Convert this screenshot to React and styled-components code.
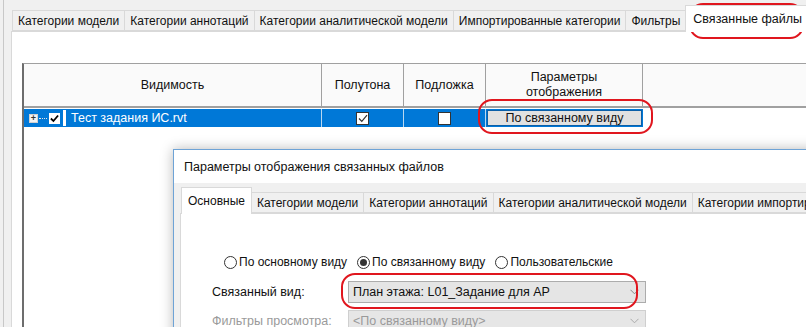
import React from 'react'
import styled, { createGlobalStyle } from 'styled-components'

const Global = createGlobalStyle`
    body {
        margin: 0;
        background: #f0f0f0;
        font-family: "Liberation Sans", Arial, sans-serif;
        font-size: 12px;
        color: #1e1e1e;
        overflow: hidden;
    }
`

const Screen = styled.div`
    position: relative;
    width: 806px;
    height: 327px;
    overflow: hidden;
    background: linear-gradient(to right, #f0f0f0 3px, #c8c8c8 3px, #c8c8c8 4px, #f0f0f0 4px);
    box-sizing: border-box;
    padding: 10px 0 0 11px;
    display: flex;
    flex-direction: column;
`

const TabBar = styled.div`
    display: flex;
    align-items: flex-end;
    height: 21px;
    padding-left: ${p => p.$pad || 2}px;
    position: relative;
    z-index: 1;
`

const Tab = styled.div`
    height: ${p => (p.$active ? 27 : 21)}px;
    margin-bottom: ${p => (p.$active ? -1 : 0)}px;
    padding: 0 ${p => p.$px || 5}px;
    display: flex;
    align-items: center;
    box-sizing: border-box;
    background: ${p => (p.$active ? '#fff' : '#f0f0f0')};
    border: 1px solid #d9d9d9;
    border-bottom: ${p => (p.$active ? 'none' : '1px solid #d9d9d9')};
    margin-left: -1px;
    white-space: nowrap;
    font-size: ${p => p.$fs || 12}px;
    color: #111;
`

const Pane = styled.div`
    flex: 1;
    background: #fff;
    border: 1px solid #d9d9d9;
    border-right: none;
    padding: 31px 0 0 10px;
`

const Table = styled.div`
    border-top: 1px solid #a0a0a0;
    border-left: 2px solid #6d6d6d;
    height: 300px;
`

const HeadRow = styled.div`
    display: flex;
    height: 42px;
    background: #fafafa;
    border-bottom: 2px solid #a0a0a0;
`

const HeadCell = styled.div`
    width: ${p => p.$w}px;
    flex: ${p => (p.$w ? 'none' : 1)};
    border-right: ${p => (p.$w ? '1px solid #a0a0a0' : 'none')};
    display: flex;
    align-items: center;
    justify-content: center;
    text-align: center;
    font-size: 12.5px;
    line-height: 15px;
    color: #111;
`

const Row = styled.div`
    display: flex;
    height: 18px;
    width: 619px;
    background: #0078d7;
    color: #fff;
    margin-top: 1px;
`

const Cell = styled.div`
    width: ${p => p.$w}px;
    border-right: ${p => (p.$last ? 'none' : '1px solid #b9d7f0')};
    display: flex;
    align-items: center;
    justify-content: ${p => (p.$left ? 'flex-start' : 'center')};
    box-sizing: border-box;
    font-size: 12.5px;
`

const Expander = styled.span`
    width: 7px;
    height: 7px;
    border: 1px solid #d0d0d0;
    background: #f3f3f3;
    margin-left: 5px;
    display: inline-flex;
    align-items: center;
    justify-content: center;
    color: #333;
    font-size: 9px;
    line-height: 1;
    font-weight: bold;
`

const Dots = styled.span`
    width: 8px;
    border-top: 1px dotted #e6e6e6;
    margin: 0 2px 0 1px;
`

const Box = styled.span`
    width: ${p => p.$s || 13}px;
    height: ${p => p.$s || 13}px;
    box-sizing: border-box;
    background: #fff;
    border: 1px solid ${p => p.$border || '#333'};
    display: inline-flex;
    align-items: center;
    justify-content: center;
`

const Divider = styled.span`
    width: 3px;
    align-self: stretch;
    background: #fff;
    margin: 1px 5px 1px 3px;
`

const CellButton = styled.div`
    width: 155px;
    height: 16px;
    box-sizing: border-box;
    background: #e1e1e1;
    border: 1px solid #0b5fa8;
    color: #111;
    display: flex;
    align-items: center;
    justify-content: center;
    font-size: 12.5px;
`

const Dialog = styled.div`
    position: absolute;
    left: 173px;
    top: 149px;
    width: 700px;
    height: 220px;
    background: #f0f0f0;
    border: 1px solid #6ea3d6;
    box-shadow: 0 0 12px rgba(0, 0, 0, 0.28);
    display: flex;
    flex-direction: column;
`

const TitleBar = styled.div`
    height: 33px;
    background: #fff;
    display: flex;
    align-items: center;
    padding-left: 10px;
    font-size: 12.5px;
    color: #111;
`

const DialogBody = styled.div`
    flex: 1;
    padding: 9px 0 0 6px;
    display: flex;
    flex-direction: column;
`

const DialogPane = styled.div`
    flex: 1;
    background: #fff;
    border: 1px solid #d9d9d9;
    padding: 37px 0 0 31px;
`

const RadioRow = styled.div`
    display: flex;
    align-items: center;
    padding-left: 12px;
    height: 22px;
`

const RadioItem = styled.label`
    display: flex;
    align-items: center;
    margin-right: 10px;
    font-size: 12px;
    color: #111;
`

const Radio = styled.span`
    width: 13px;
    height: 13px;
    border-radius: 50%;
    border: 1px solid #333;
    box-sizing: border-box;
    background: #fff;
    margin-right: 2px;
    display: inline-flex;
    align-items: center;
    justify-content: center;
    &::after {
        content: '';
        width: 7px;
        height: 7px;
        border-radius: 50%;
        background: ${p => (p.$on ? '#333' : 'transparent')};
    }
`

const FormRow = styled.div`
    display: flex;
    align-items: center;
    margin-top: ${p => p.$mt}px;
`

const Label = styled.div`
    width: 136px;
    font-size: 12.5px;
    color: ${p => (p.$disabled ? '#9a9a9a' : '#111')};
`

const Combo = styled.div`
    width: 298px;
    height: 22px;
    box-sizing: border-box;
    border: 1px solid ${p => (p.$disabled ? '#cfcfcf' : '#acacac')};
    background: ${p => (p.$disabled ? '#e6e6e6' : '#e5e5e5')};
    color: ${p => (p.$disabled ? '#9a9a9a' : '#111')};
    display: flex;
    align-items: center;
    justify-content: space-between;
    padding: 0 6px 0 4px;
    font-size: 12.5px;
`

const Marker = styled.div`
    position: absolute;
    left: ${p => p.$x}px;
    top: ${p => p.$y}px;
    width: ${p => p.$w}px;
    height: ${p => p.$h}px;
    border: 2px solid #e0161e;
    border-radius: ${p => p.$r}px;
    box-sizing: border-box;
    pointer-events: none;
`

const Check = ({ bold }) => (
    <svg width="10" height="9" viewBox="0 0 10 9">
        <path d="M1 4.5 L3.8 7.3 L9 1.2" fill="none" stroke={bold ? '#000' : '#333'} strokeWidth={bold ? 2 : 1.2} />
    </svg>
)

const Chevron = ({ color }) => (
    <svg width="9" height="6" viewBox="0 0 9 6">
        <path d="M0.5 0.8 L4.5 4.8 L8.5 0.8" fill="none" stroke={color} strokeWidth="1" />
    </svg>
)

const tabs = ['Категории модели', 'Категории аннотаций', 'Категории аналитической модели', 'Импортированные категории', 'Фильтры']
const dialogTabs = ['Категории модели', 'Категории аннотаций', 'Категории аналитической модели', 'Категории импортированных']

const App = () => {
    return (
        <>
            <Global />
            <Screen>
                <TabBar>
                    {tabs.map(t => <Tab key={t} $px={5}>{t}</Tab>)}
                    <Tab $active $px={7} $fs={12.5}>Связанные файлы</Tab>
                </TabBar>
                <Pane>
                    <Table>
                        <HeadRow>
                            <HeadCell $w={297}>Видимость</HeadCell>
                            <HeadCell $w={81}>Полутона</HeadCell>
                            <HeadCell $w={81}>Подложка</HeadCell>
                            <HeadCell $w={156}>Параметры<br />отображения</HeadCell>
                            <HeadCell />
                        </HeadRow>
                        <Row>
                            <Cell $w={298} $left>
                                <Expander>+</Expander>
                                <Dots />
                                <Box $s={11} $border="#fff"><Check bold /></Box>
                                <Divider />
                                Тест задания ИС.rvt
                            </Cell>
                            <Cell $w={82}><Box><Check /></Box></Cell>
                            <Cell $w={82}><Box /></Cell>
                            <Cell $w={157} $last><CellButton>По связанному виду</CellButton></Cell>
                        </Row>
                    </Table>
                </Pane>

                <Dialog>
                    <TitleBar>Параметры отображения связанных файлов</TitleBar>
                    <DialogBody>
                        <TabBar $pad={2}>
                            <Tab $active $px={6}>Основные</Tab>
                            {dialogTabs.map(t => <Tab key={t} $px={5}>{t}</Tab>)}
                        </TabBar>
                        <DialogPane>
                            <RadioRow>
                                <RadioItem><Radio />По основному виду</RadioItem>
                                <RadioItem><Radio $on />По связанному виду</RadioItem>
                                <RadioItem><Radio />Пользовательские</RadioItem>
                            </RadioRow>
                            <FormRow $mt={8}>
                                <Label>Связанный вид:</Label>
                                <Combo>План этажа: L01_Задание для АР<Chevron color="#888" /></Combo>
                            </FormRow>
                            <FormRow $mt={7}>
                                <Label $disabled>Фильтры просмотра:</Label>
                                <Combo $disabled>&lt;По связанному виду&gt;<Chevron color="#aaa" /></Combo>
                            </FormRow>
                        </DialogPane>
                    </DialogBody>
                </Dialog>

                <Marker $x={689} $y={3} $w={115} $h={36} $r={14} />
                <Marker $x={478} $y={99} $w={175} $h={35} $r={14} />
                <Marker $x={341} $y={273} $w={297} $h={36} $r={14} />
            </Screen>
        </>
    )
}

export default App
